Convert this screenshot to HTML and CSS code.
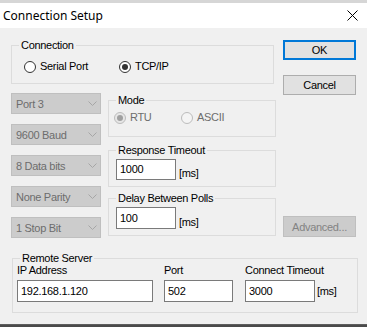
FILE: index.html
```html
<!DOCTYPE html>
<html>
<head>
<meta charset="utf-8">
<link rel="stylesheet" href="styles.css">
</head>
<body>
<div class="window">
  <div class="top-strip"></div>
  <div class="titlebar">
    <span class="title">Connection Setup</span>
    <svg class="close" width="11" height="11" viewBox="0 0 11 11"><path d="M0.5 0.5 L10.5 10.5 M10.5 0.5 L0.5 10.5" stroke="#000" stroke-width="1" fill="none"/></svg>
  </div>
  <div class="client">
    <div class="upper">
      <div class="left">
        <div class="group connection">
          <div class="legend">Connection</div>
          <div class="radio-row conn-row">
            <label class="radio w95"><span class="dot"></span>Serial Port</label>
            <label class="radio"><span class="dot on"></span>TCP/IP</label>
          </div>
        </div>
        <div class="serial-row">
          <div class="combos">
            <div class="combo"><span>Port 3</span><svg width="9" height="5" viewBox="0 0 9 5"><path d="M0.5 0.5 L4.5 4.5 L8.5 0.5" stroke="#a6a6a6" fill="none"/></svg></div>
            <div class="combo"><span>9600 Baud</span><svg width="9" height="5" viewBox="0 0 9 5"><path d="M0.5 0.5 L4.5 4.5 L8.5 0.5" stroke="#a6a6a6" fill="none"/></svg></div>
            <div class="combo"><span>8 Data bits</span><svg width="9" height="5" viewBox="0 0 9 5"><path d="M0.5 0.5 L4.5 4.5 L8.5 0.5" stroke="#a6a6a6" fill="none"/></svg></div>
            <div class="combo"><span>None Parity</span><svg width="9" height="5" viewBox="0 0 9 5"><path d="M0.5 0.5 L4.5 4.5 L8.5 0.5" stroke="#a6a6a6" fill="none"/></svg></div>
            <div class="combo"><span>1 Stop Bit</span><svg width="9" height="5" viewBox="0 0 9 5"><path d="M0.5 0.5 L4.5 4.5 L8.5 0.5" stroke="#a6a6a6" fill="none"/></svg></div>
          </div>
          <div class="modbus">
            <div class="group mode">
              <div class="legend">Mode</div>
              <div class="radio-row mode-row">
                <label class="radio disabled w67"><span class="dot on"></span>RTU</label>
                <label class="radio disabled"><span class="dot"></span>ASCII</label>
              </div>
            </div>
            <div class="group timeout">
              <div class="legend">Response Timeout</div>
              <div class="field-row">
                <div class="input w60 h21">1000</div><span class="unit">[ms]</span>
              </div>
            </div>
            <div class="group delay">
              <div class="legend">Delay Between Polls</div>
              <div class="field-row">
                <div class="input w60 h22">100</div><span class="unit">[ms]</span>
              </div>
            </div>
          </div>
        </div>
      </div>
      <div class="right">
        <div class="btn default">OK</div>
        <div class="btn cancel">Cancel</div>
        <div class="btn advanced">Advanced...</div>
      </div>
    </div>
    <div class="group remote">
      <div class="legend">Remote Server</div>
      <div class="remote-row">
        <div class="field ip">
          <div class="flabel">IP Address</div>
          <div class="input h22">192.168.1.120</div>
        </div>
        <div class="field port">
          <div class="flabel">Port</div>
          <div class="input h22">502</div>
        </div>
        <div class="field ct">
          <div class="flabel">Connect Timeout</div>
          <div class="ct-row"><div class="input h22 w70">3000</div><span class="unit2">[ms]</span></div>
        </div>
      </div>
    </div>
  </div>
  <div class="bottom-strip"></div>
</div>
</body>
</html>
```
FILE: styles.css
```css
* { box-sizing: border-box; }
html, body { margin: 0; padding: 0; }
body {
  width: 367px;
  height: 327px;
  overflow: hidden;
  background: #f0f0f0;
  font-family: "Liberation Sans", Arial, sans-serif;
  font-size: 11px;
  letter-spacing: -0.3px;
  color: #000;
}
.window { display: flex; flex-direction: column; height: 327px; }
.top-strip { height: 3px; background: #d6d6d6; }
.titlebar {
  height: 25px;
  background: #fff;
  display: flex;
  align-items: center;
  justify-content: space-between;
  padding: 0 9px 0 3px;
}
.title {
  font-family: "Noto Sans", sans-serif;
  font-size: 12px;
  letter-spacing: 0;
  color: #000;
  padding-bottom: 1px;
}
.close { display: block; }
.client { flex: 1; padding-left: 11px; }
.bottom-strip { height: 3px; background: #4a4a4a; border-top: 1px solid #5d5d5d; }

.upper { display: flex; }
.left { width: 265px; }
.right { width: 73px; margin-left: 7px; display: flex; flex-direction: column; }

.group { border: 1px solid #dcdcdc; }
.legend {
  height: 13px;
  line-height: 13px;
  margin: -7px 0 0 7px;
  padding: 0 2px;
  width: fit-content;
  background: #f0f0f0;
  white-space: nowrap;
}

.connection { margin-top: 17px; width: 263px; height: 39px; }
.radio-row { display: flex; align-items: center; height: 13px; }
.conn-row { margin-top: 8px; padding-left: 12px; }
.radio { display: flex; align-items: center; line-height: 13px; white-space: nowrap; }
.radio .dot {
  width: 12px; height: 12px;
  border: 1px solid #333;
  border-radius: 50%;
  background: #fff;
  margin-right: 4px;
  display: flex; align-items: center; justify-content: center;
  flex: none;
}
.radio .dot.on::after {
  content: "";
  width: 6px; height: 6px;
  border-radius: 50%;
  background: #333;
}
.radio.disabled { color: #6d6d6d; }
.radio.disabled .dot { border-color: #bcbcbc; background: #f4f4f4; }
.radio.disabled .dot.on { background: #e6e6e6; }
.radio.disabled .dot.on::after { background: #a0a0a0; }
.w95 { width: 95px; }
.w67 { width: 67px; }

.serial-row { display: flex; margin-top: 9px; }
.combos { width: 90px; display: flex; flex-direction: column; gap: 10px; }
.combo {
  height: 21px;
  background: #cccccc;
  border: 1px solid #bfbfbf;
  color: #6d6d6d;
  display: flex;
  align-items: center;
  justify-content: space-between;
  padding: 0 3px 0 4px;
  white-space: nowrap;
}
.combo svg { display: block; }

.modbus { width: 168px; margin-left: 7px; }
.mode { margin-top: 7px; height: 37px; }
.mode-row { margin-top: 4px; padding-left: 5px; }
.timeout { margin-top: 13px; height: 37px; }
.delay { margin-top: 11px; height: 38px; }
.field-row { display: flex; align-items: flex-end; margin-top: 2px; padding-left: 7px; }
.input {
  background: #fff;
  border: 1px solid #7a7a7a;
  padding-left: 3px;
  display: flex;
  align-items: center;
  white-space: nowrap;
  line-height: 13px;
}
.w60 { width: 60px; }
.w70 { width: 70px; }
.h21 { height: 21px; }
.h22 { height: 22px; }
.unit { margin-left: 3px; line-height: 13px; }

.btn {
  height: 20px;
  display: flex;
  align-items: center;
  justify-content: center;
  background: #e1e1e1;
  border: 1px solid #adadad;
  white-space: nowrap;
}
.btn.default { margin-top: 12px; border: 2px solid #0078d7; }
.btn.cancel { margin-top: 15px; }
.btn.advanced { margin-top: 121px; height: 21px; background: #cccccc; border-color: #bfbfbf; color: #838383; }

.remote { margin: 20px 0 0 1px; width: 346px; height: 55px; }
.remote-row { display: flex; margin-top: -1px; padding-left: 4px; }
.flabel { line-height: 13px; height: 13px; margin-bottom: 3px; white-space: nowrap; }
.ip { width: 136px; }
.port { width: 69px; margin-left: 11px; }
.ct { margin-left: 12px; }
.ct-row { display: flex; align-items: center; }
.unit2 { margin-left: 2px; line-height: 13px; }
```
